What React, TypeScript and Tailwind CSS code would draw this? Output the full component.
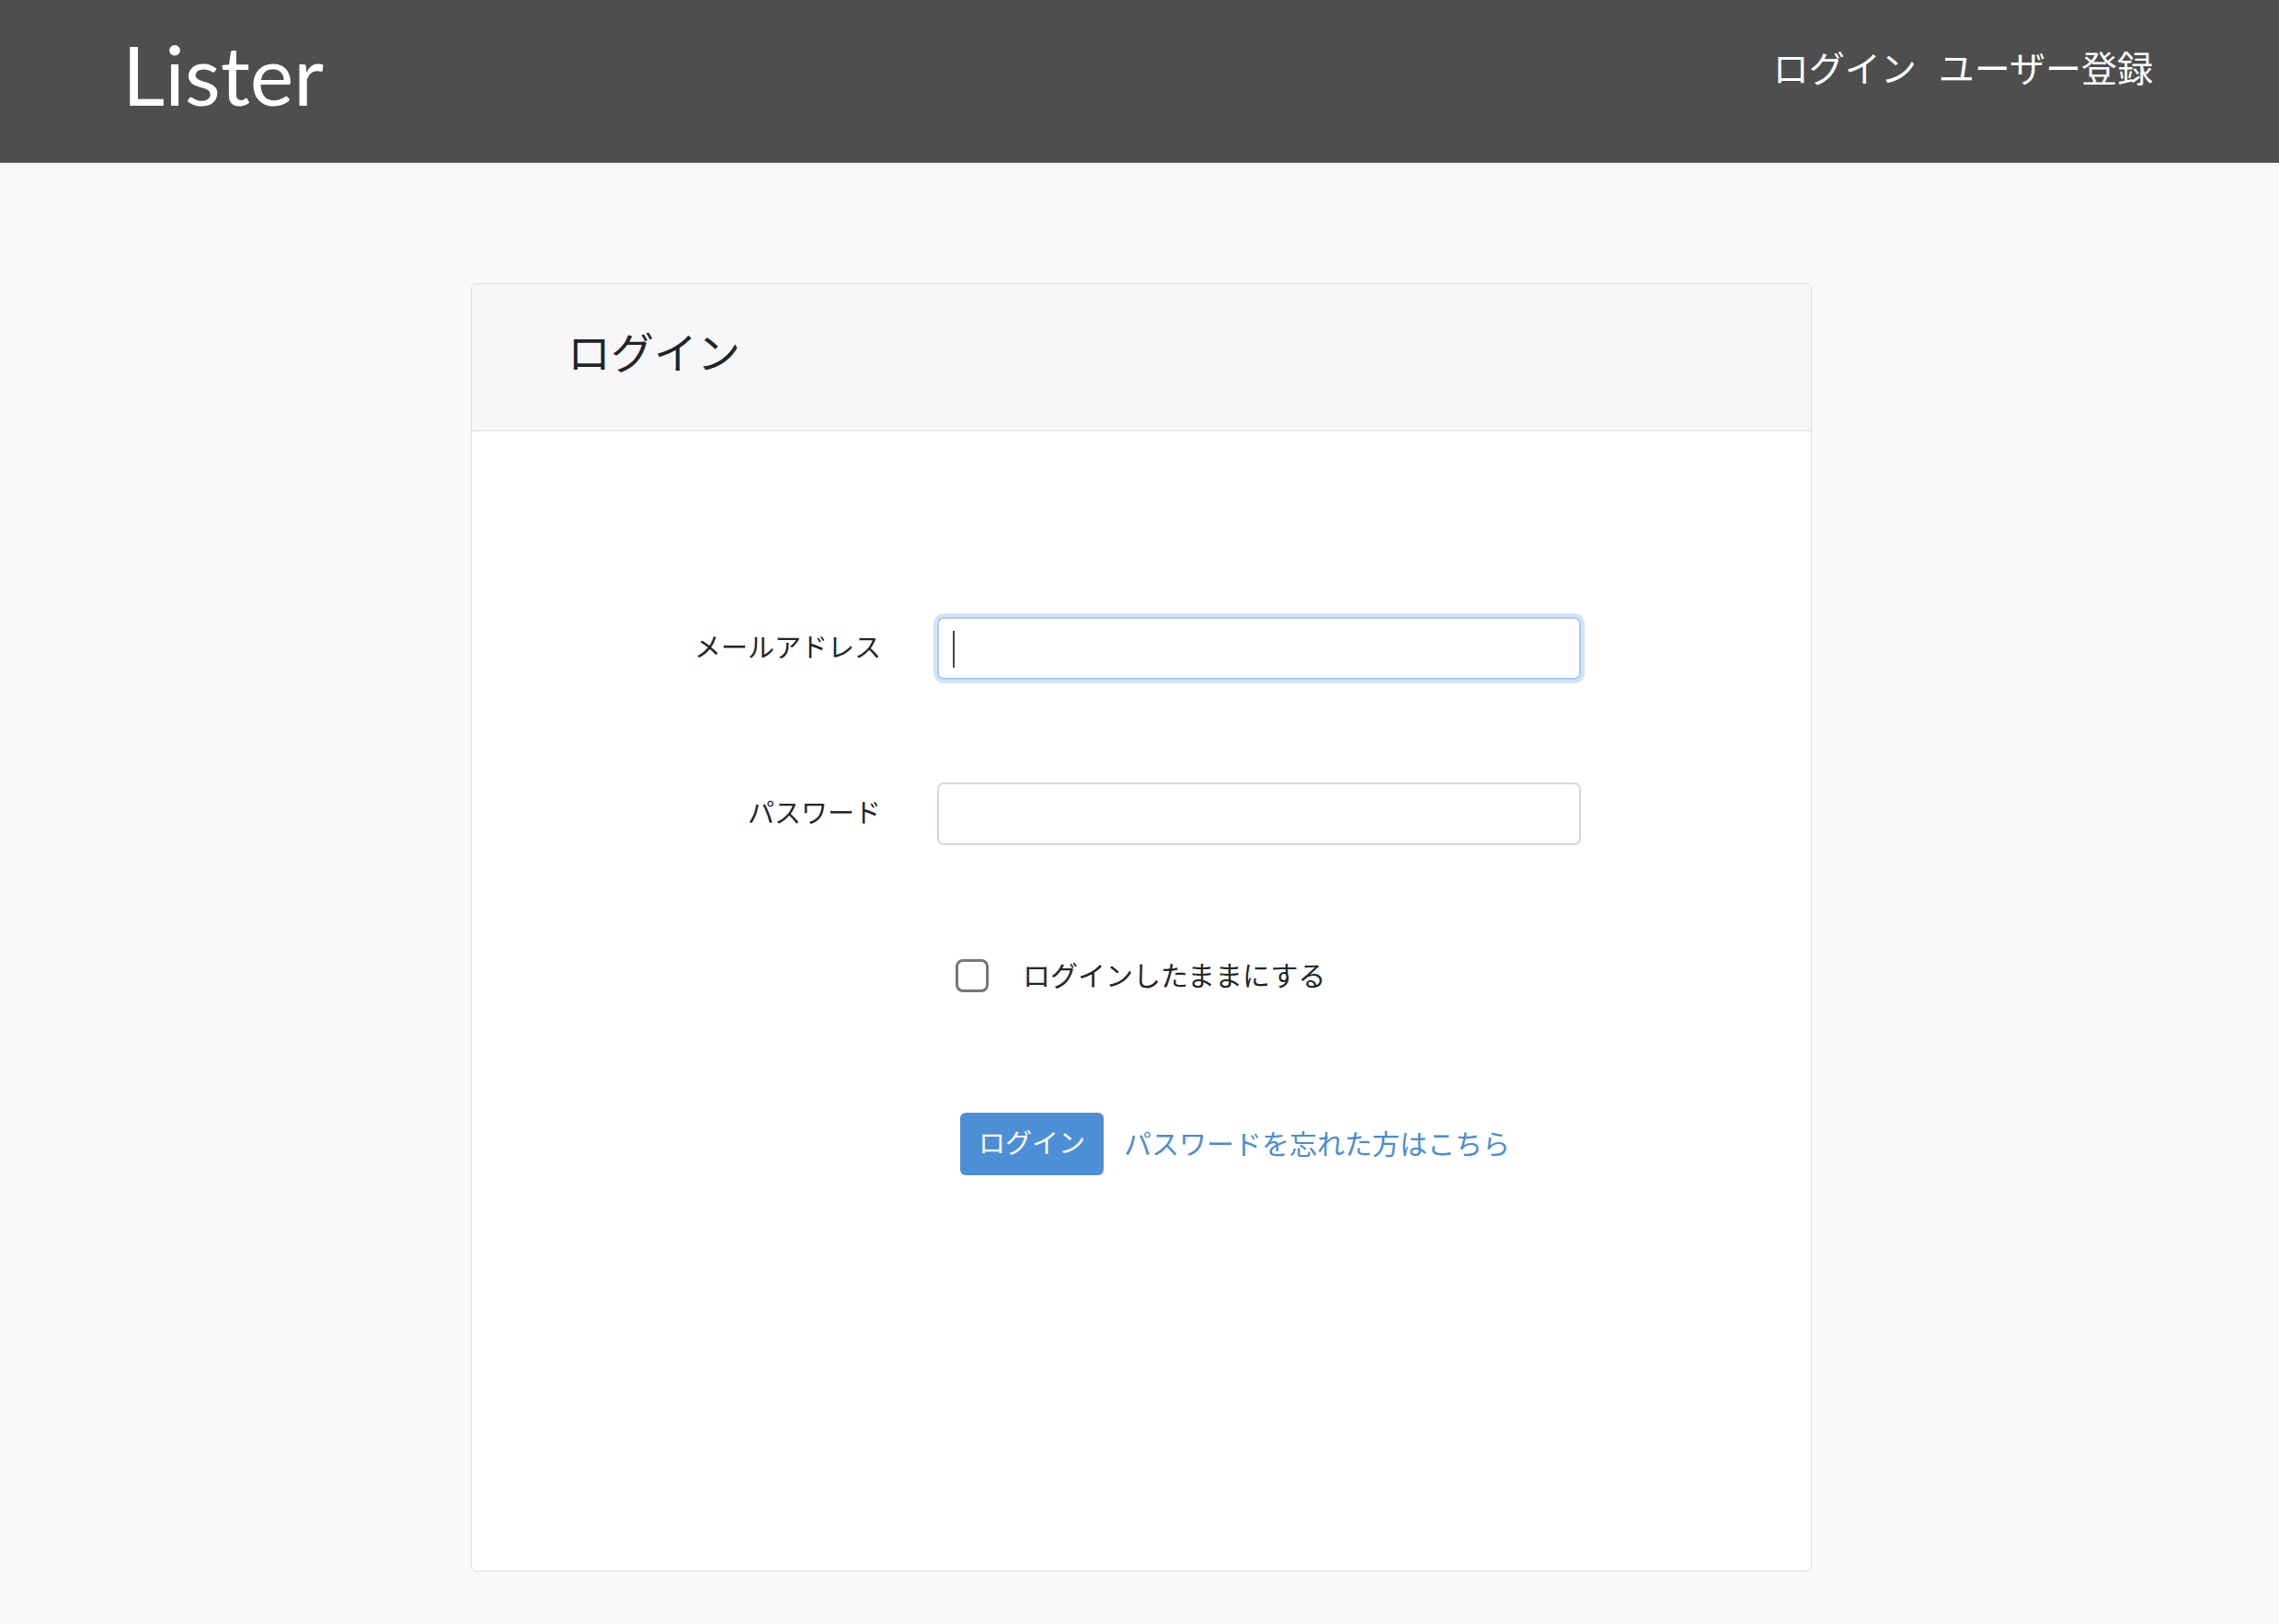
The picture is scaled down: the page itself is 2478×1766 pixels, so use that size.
import { useState } from 'react';

const jp = "font-['Noto_Sans_CJK_JP','Noto_Sans',sans-serif]";

export default function App() {
  const [remember, setRemember] = useState(false);

  return (
    <div className={`min-h-screen bg-[#f8f9fb] text-[#212529] ${jp}`}>
      {/* Navbar */}
      <header className="h-[177px] bg-[#4e4e4e] shadow-[0_2px_4px_rgba(0,0,0,0.06)] flex items-center justify-between px-[137px]">
        <a className="font-['Lato',sans-serif] text-[90px] leading-none text-white pb-[18px] -ml-[4px]">Lister</a>
        <nav className="flex items-center gap-[24px] text-[39px] text-white pb-[32px]">
          <a>ログイン</a>
          <a>ユーザー登録</a>
        </nav>
      </header>

      {/* Card */}
      <main className="pt-[131px] pl-[4px]">
        <div className="mx-auto w-[1458px] bg-white border border-[#dedede] rounded-[6px] overflow-hidden">
          <div className="h-[160px] bg-[#f7f7f7] border-b border-[#dedede] flex items-center px-[104px]">
            <h1 className="text-[47px] leading-none pb-[16px]">ログイン</h1>
          </div>

          <div className="h-[1239px] pt-[202px]">
            {/* Email */}
            <div className="flex items-center">
              <label className="w-[445px] text-right text-[29px] pb-[5px]">メールアドレス</label>
              <div className="relative ml-[61px] w-[700px]">
                <input
                  type="email"
                  className="w-full h-[68px] rounded-[7px] border-2 border-[#a9cbf0] ring-4 ring-[#d3e4f7] outline-none px-[18px] text-[29px]"
                />
                <span className="pointer-events-none absolute left-[17px] top-[15px] h-[40px] w-[2px] bg-[#444]" />
              </div>
            </div>

            {/* Password */}
            <div className="flex items-center mt-[112px]">
              <label className="w-[445px] text-right text-[29px] pb-[5px]">パスワード</label>
              <input
                type="password"
                className="ml-[61px] w-[700px] h-[68px] rounded-[7px] border-2 border-[#d3d7db] outline-none px-[18px] text-[29px]"
              />
            </div>

            {/* Remember */}
            <div className="flex items-center mt-[118px] pl-[526px]">
              <button
                onClick={() => setRemember(!remember)}
                className="w-[36px] h-[36px] rounded-[8px] border-[3px] border-[#767676] bg-white"
              />
              <span className="ml-[37px] text-[30px] pb-[2px]">ログインしたままにする</span>
            </div>

            {/* Actions */}
            <div className="flex items-center mt-[126px] pl-[531px]">
              <button className="h-[68px] px-[20px] rounded-[6px] bg-[#4d8fd6] text-white text-[29px] pb-[4px]">ログイン</button>
              <a className="ml-[22px] text-[30px] text-[#4a8cd3] pb-[4px]">パスワードを忘れた方はこちら</a>
            </div>
          </div>
        </div>
      </main>
    </div>
  );
}
